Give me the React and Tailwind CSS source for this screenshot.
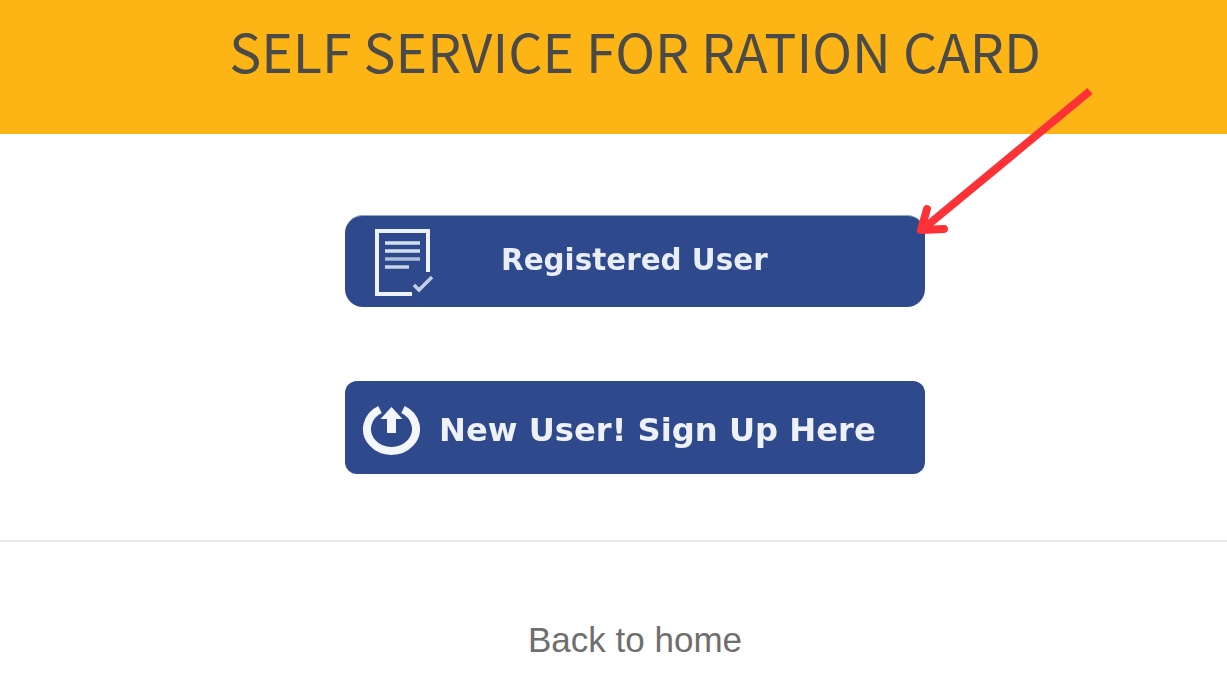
function RegisteredIcon() {
  return (
    <svg width="62" height="72" viewBox="0 0 62 72" fill="none" className="shrink-0 blur-[0.4px]">
      <path d="M56 46V5H5v63h35" stroke="#eef2fa" strokeWidth="4" />
      <path d="M13 17h35M13 25h35" stroke="#d6dfef" strokeWidth="3.5" />
      <path d="M13 33h35" stroke="#aebfdd" strokeWidth="3.5" />
      <path d="M13 41h24" stroke="#c9d5ea" strokeWidth="3.5" />
      <path d="M42 59l5 5 13-13" stroke="#c4d1e8" strokeWidth="3.5" />
    </svg>
  );
}

function SignUpIcon() {
  return (
    <svg width="58" height="54" viewBox="0 0 58 54" fill="none" className="mb-[3px] shrink-0 blur-[0.4px]">
      <path d="M18 7.500A24.500 22 0 1 0 41 7.500" stroke="#f4f6fb" strokeWidth="8" />
      <path d="M29.500 5l11 12h-6.500v14h-9V17h-6.500z" fill="#f4f6fb" />
    </svg>
  );
}

export default function App() {
  return (
    <div className="relative h-[675px] overflow-hidden bg-white font-['Liberation_Sans',sans-serif]">
      <header className="h-[134px] bg-[#fdb515] pt-[16px] pl-[43px] text-center">
        <h1 className="text-[53.7px] leading-[68px] font-normal text-[#4a4a48] font-['Noto_Sans_CJK_SC',sans-serif]">
          SELF SERVICE FOR RATION CARD
        </h1>
      </header>

      <main className="flex h-[408px] flex-col items-center border-b-2 border-[#e8e8e8] pt-[81px] pl-[43px]">
        <a className="flex h-[92px] w-[580px] items-center rounded-[18px] border-t border-[#8fa3c8] bg-[#2e4a8c] pl-[27px]">
          <RegisteredIcon />
          <span className="ml-[67px] pb-[3px] font-['DejaVu_Sans',sans-serif] text-[29.4px] font-bold text-[#e8edf6] blur-[0.5px]">
            Registered User
          </span>
        </a>
        <a className="mt-[74px] flex h-[93px] w-[580px] items-center rounded-[12px] bg-[#2e4a8c] pl-[17px] pt-[5px]">
          <SignUpIcon />
          <span className="ml-[19px] font-['DejaVu_Sans',sans-serif] text-[32.2px] font-bold text-[#eef1f8] blur-[0.5px]">
            New User! Sign Up Here
          </span>
        </a>
      </main>

      <footer className="pt-[78px] pl-[43px] text-center text-[35px] leading-[40px] text-[#6e6e6e]">
        Back to home
      </footer>

      <svg className="absolute left-[900px] top-[80px]" width="200" height="170" viewBox="900 80 200 170" fill="none">
        <path d="M1090 91L923 229" stroke="#fc3237" strokeWidth="8" />
        <path d="M927 209l-6 21 23-1" stroke="#fc3237" strokeWidth="8" strokeLinecap="round" strokeLinejoin="round" />
      </svg>
    </div>
  );
}
